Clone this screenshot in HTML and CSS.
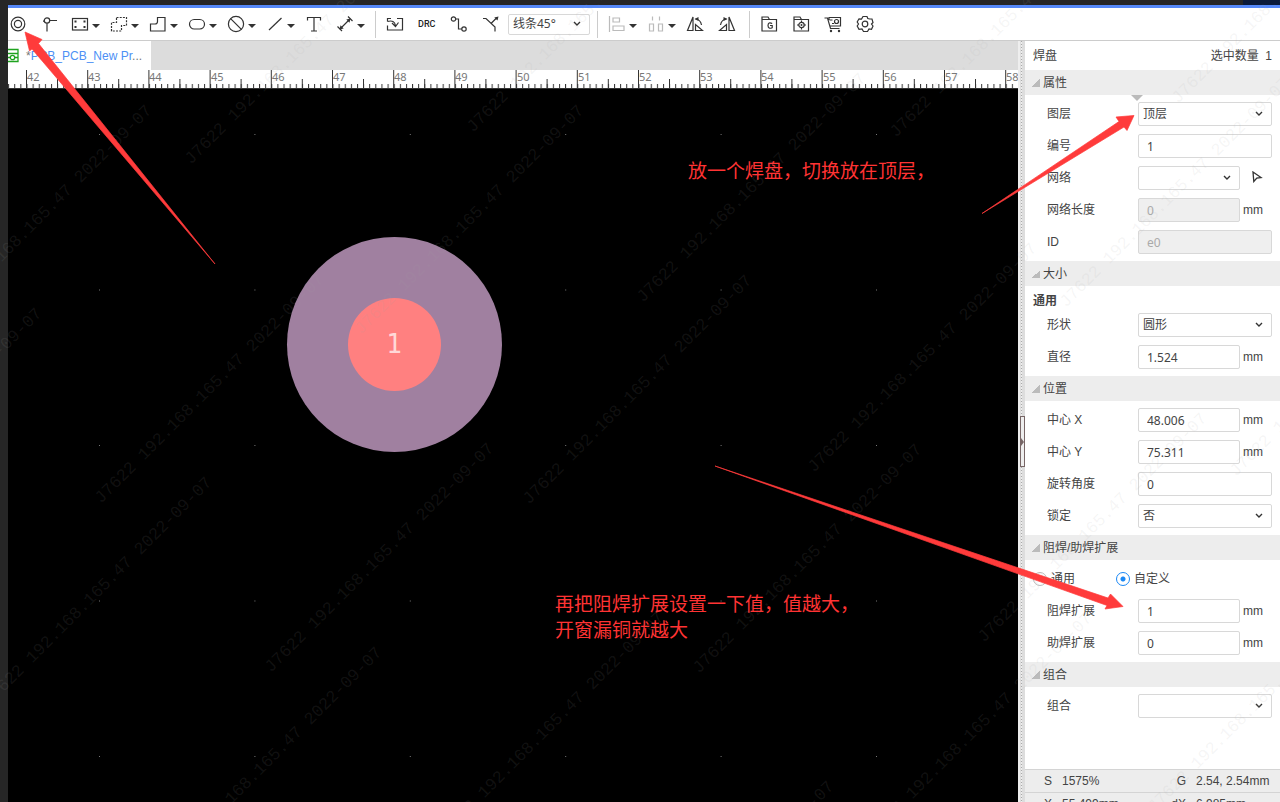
FILE: index.html
```html
<!DOCTYPE html>
<html lang="zh-CN">
<head>
<meta charset="utf-8">
<title>PCB_New Project</title>
<link rel="stylesheet" href="styles.css">
</head>
<body>
<div class="titlebar"><span class="titlebar-end"></span></div>
<div class="window">
  <header class="toolbar">
    <div class="tools">
      <button class="tool" aria-label="焊盘"><svg viewBox="0 0 18 18"><circle cx="9" cy="9" r="6.8"/><circle cx="9" cy="9" r="3.6"/></svg></button>
      <button class="tool" aria-label="过孔"><svg viewBox="0 0 18 18"><circle cx="7" cy="5.500" r="2.700"/><path d="M9.700 5.500H17M7 8.200V16.500M3 6.200h1.300"/></svg></button>
      <button class="tool drop" aria-label="矩形"><svg viewBox="0 0 18 18"><rect x="1.500" y="3.500" width="15" height="11.500"/><path class="fill" d="M3.500 5.500h2v2h-2zM12.500 5.500h2v2h-2zM3.500 11h2v2h-2zM12.500 11h2v2h-2z"/></svg><i></i></button>
      <button class="tool drop" aria-label="区域"><svg viewBox="0 0 18 18"><path stroke-dasharray="2 1.200" d="M6.500 2.500h10v8h-5v5.500h-10v-8.500h5z"/></svg><i></i></button>
      <button class="tool drop" aria-label="铺铜"><svg viewBox="0 0 18 18"><path d="M8.500 2.500h7.500v13.500H1.500V9h4.500q2.500 0 2.500-2.500z"/></svg><i></i></button>
      <button class="tool drop" aria-label="槽"><svg viewBox="0 0 18 18"><rect x="1.500" y="4.500" width="15" height="9.500" rx="4.700"/></svg><i></i></button>
      <button class="tool drop" aria-label="禁止区域"><svg viewBox="0 0 18 18"><circle cx="9" cy="9" r="7.600"/><path d="M3.600 3.600l10.800 10.800"/></svg><i></i></button>
      <button class="tool drop" aria-label="线条"><svg viewBox="0 0 18 18"><path d="M3 15L15.500 3"/></svg><i></i></button>
      <button class="tool" aria-label="文本"><svg viewBox="0 0 18 18"><path d="M2.500 5.500V2.500h13v3M9 2.500v13.500M6 16h6"/></svg></button>
      <button class="tool drop" aria-label="尺寸"><svg viewBox="0 0 18 18"><path d="M4.500 13.500L13.500 4.500M12 1.500l4.500 4.500M1.500 11.500L6 16"/><path class="fill" d="M14.500 3.500l-1 4.200-3.200-3.200zM3.500 14.500l1-4.200 3.200 3.200z"/></svg><i></i></button>
    </div>
    <span class="sep"></span>
    <div class="tools wide">
      <button class="tool" aria-label="导入变更"><svg viewBox="0 0 18 18"><path d="M5 3.500H1.500v3M11 3.500H16.500V15H1.500V10.500M1.500 6.500q7-2 8 4M6 8l3.500 3.500 3-4"/></svg></button>
      <button class="tool text">DRC</button>
      <button class="tool" aria-label="布线"><svg viewBox="0 0 18 18"><circle cx="3.500" cy="4" r="2.200"/><circle cx="14" cy="14" r="2.200"/><path d="M5.700 4H8.500V14h3.300"/></svg></button>
      <button class="tool" aria-label="自动布线"><svg viewBox="0 0 18 18"><path d="M1 3.500h3L13 12v4.500M9 8.500L15 2.500"/><path class="fill" d="M16.500 1.500l-1 4-3.200-3z"/></svg></button>
    </div>
    <select class="field mode" aria-label="布线拐角"><option>线条45°</option></select>
    <span class="sep"></span>
    <div class="tools">
      <button class="tool drop faint" aria-label="对齐"><svg viewBox="0 0 18 18"><path d="M1.500 1v16M5 3h6.500v4H5zM5 11h11v4.500H5z"/></svg><i></i></button>
      <button class="tool drop faint" aria-label="分布"><svg viewBox="0 0 18 18"><path d="M5.500 1.500v4M12.500 1.500v4M2.500 9h4v7h-4zM11.500 9h4v7h-4z"/></svg><i></i></button>
      <div class="tools wide">
        <button class="tool" aria-label="向左旋转"><svg viewBox="0 0 18 18"><path d="M7 2v13.500H1.500zM9.500 15.500h7l-7-6zM9.500 4q5 .500 6 6"/><path class="fill" d="M8.500 4l4-2v4z"/></svg></button>
        <button class="tool" aria-label="向右旋转"><svg viewBox="0 0 18 18"><path d="M11 2v13.500h5.500zM8.500 15.500h-7l7-6zM8.500 4q-5 .500-6 6"/><path class="fill" d="M9.500 4l-4-2v4z"/></svg></button>
      </div>
    </div>
    <span class="sep"></span>
    <div class="tools wide">
      <button class="tool" aria-label="生成制造文件"><svg viewBox="0 0 18 18"><path d="M2 16V2h6l1.500 2.500H16.500V16zM2 4.500h8M12.200 8.500q-4-2-4.200 2 .2 4 4.200 2.200V10.500H10"/></svg></button>
      <button class="tool" aria-label="导出坐标文件"><svg viewBox="0 0 18 18"><path d="M2 16V2h6l1.500 2.500H16.500V16zM2 4.500h8M9.500 5.500v2M9.500 12.500v2M5 10h2M12 10h2"/><circle cx="9.500" cy="10" r="2.700"/><circle class="fill" cx="9.500" cy="10" r="1"/></svg></button>
      <button class="tool" aria-label="下单"><svg viewBox="0 0 18 18"><path d="M.500 3H3.500L6.500 13.500H15.500M5 5v-2.500h11.500V11H6M5.500 5h3M8 8.500h2"/><circle cx="12.500" cy="6.500" r="2"/><circle class="fill" cx="7" cy="16" r="1.200"/><circle class="fill" cx="15" cy="16" r="1.200"/></svg></button>
      <button class="tool" aria-label="设置"><svg viewBox="0 0 18 18"><path d="M7 1.500h4l.8 2 2 .5L16 4l1 3.500-1.500 1.500L17 11l-1.500 3.300-2.500-.3-1.500 2.500h-4L6 14l-3 .3L1.200 11 2.500 9 1.200 7 3 3.800l2.500.3z"/><circle cx="9" cy="9" r="2.800"/></svg></button>
    </div>
  </header>

  <div class="workspace">
    <main class="editor">
      <nav class="tabs">
        <a class="tab" href="#pcb"><svg class="tab-icon" viewBox="0 0 11 15"><path d="M0 1.500h10v12H0M0 5.500h10M0 9.500h2M7 9.500h3"/><circle cx="4.500" cy="9.500" r="2.200"/></svg><span><span class="mark">*</span>PCB_PCB_New Pr<span class="mark">...</span></span></a>
      </nav>
      <svg class="ruler" height="19" aria-hidden="true">
        <defs>
          <pattern id="minor" x="18.500" y="0" width="6.120" height="19" patternUnits="userSpaceOnUse"><path d="M.5 14v4"/></pattern>
          <pattern id="half" x="49" y="0" width="61.200" height="19" patternUnits="userSpaceOnUse"><path d="M.5 9v9"/></pattern>
          <pattern id="major" x="18" y="0" width="61.200" height="19" patternUnits="userSpaceOnUse"><path d="M.5 0v18"/></pattern>
        </defs>
        <g stroke="none">
          <rect width="100%" height="19" fill="url(#minor)"/>
          <rect width="100%" height="19" fill="url(#half)"/>
          <rect width="100%" height="19" fill="url(#major)"/>
        </g>
        <path d="M0 18.500h2000"/>
        <g>
          <text x="19" y="11">42</text><text x="80" y="11">43</text><text x="141" y="11">44</text><text x="203" y="11">45</text>
          <text x="264" y="11">46</text><text x="325" y="11">47</text><text x="386" y="11">48</text><text x="447" y="11">49</text>
          <text x="509" y="11">50</text><text x="570" y="11">51</text><text x="631" y="11">52</text><text x="692" y="11">53</text>
          <text x="753" y="11">54</text><text x="815" y="11">55</text><text x="876" y="11">56</text><text x="937" y="11">57</text><text x="998" y="11">58</text>
        </g>
      </svg>
      <svg class="board" role="img" aria-label="PCB 画布">
        <defs><pattern id="grid" x="91" y="45" width="155.400" height="155.500" patternUnits="userSpaceOnUse"><path fill="#777" d="M0 0h1v1H0z"/></pattern></defs>
        <rect width="100%" height="100%" fill="url(#grid)"/>
        <circle cx="386.500" cy="255.500" r="107.500" fill="#a080a0"/>
        <circle cx="386.500" cy="255.500" r="46.500" fill="#ff8080"/>
        <text class="pin" x="386" y="264">1</text>
        <text class="note" x="680" y="89">放一个焊盘，切换放在顶层，</text>
        <text class="note" x="547" y="522">再把阻焊扩展设置一下值，值越大，</text>
        <text class="note" x="547" y="548">开窗漏铜就越大</text>
      </svg>
    </main>

    <div class="splitter"><button class="handle" aria-label="折叠面板"></button></div>

    <aside class="panel">
      <div class="panel-head"><span>焊盘</span><span>选中数量&nbsp; 1</span></div>

      <h2 class="section">属性</h2>
      <div class="group">
        <span class="pointer"></span>
        <div class="row"><label for="layer">图层</label><select id="layer" class="field"><option>顶层</option></select></div>
        <div class="row"><label for="num">编号</label><input id="num" class="field" value="1"></div>
        <div class="row"><label for="net">网络</label><select id="net" class="field short"><option></option></select><button class="pick" aria-label="选择网络"><svg viewBox="0 0 12 12"><path d="M2 1l8 5.500-4.200.5L2.800 10.500z"/></svg></button></div>
        <div class="row"><label for="len">网络长度</label><input id="len" class="field short" value="0" disabled><span class="unit">mm</span></div>
        <div class="row"><label for="id">ID</label><input id="id" class="field" value="e0" disabled></div>
      </div>

      <h2 class="section">大小</h2>
      <div class="group">
        <h3 class="sub">通用</h3>
        <div class="row"><label for="shape">形状</label><select id="shape" class="field"><option>圆形</option></select></div>
        <div class="row"><label for="dia">直径</label><input id="dia" class="field short" value="1.524"><span class="unit">mm</span></div>
      </div>

      <h2 class="section">位置</h2>
      <div class="group">
        <div class="row"><label for="cx">中心 X</label><input id="cx" class="field short" value="48.006"><span class="unit">mm</span></div>
        <div class="row"><label for="cy">中心 Y</label><input id="cy" class="field short" value="75.311"><span class="unit">mm</span></div>
        <div class="row"><label for="rot">旋转角度</label><input id="rot" class="field" value="0"></div>
        <div class="row"><label for="lock">锁定</label><select id="lock" class="field"><option>否</option></select></div>
      </div>

      <h2 class="section">阻焊/助焊扩展</h2>
      <div class="group">
        <div class="radios">
          <label><input type="radio" name="expand">通用</label>
          <label><input type="radio" name="expand" checked>自定义</label>
        </div>
        <div class="row"><label for="solder">阻焊扩展</label><input id="solder" class="field short" value="1"><span class="unit">mm</span></div>
        <div class="row"><label for="paste">助焊扩展</label><input id="paste" class="field short" value="0"><span class="unit">mm</span></div>
      </div>

      <h2 class="section">组合</h2>
      <div class="group">
        <div class="row"><label for="grp">组合</label><select id="grp" class="field"><option></option></select></div>
      </div>

      <footer class="status">
        <div class="status-row"><span>S</span><span>1575%</span><span class="key">G</span><span>2.54, 2.54mm</span></div>
        <div class="status-row"><span>X</span><span>55.499mm</span><span class="key">dX</span><span>6.985mm</span></div>
      </footer>
    </aside>
  </div>
</div>

<svg class="overlay" aria-hidden="true">
  <defs><text id="wm">J7622 192.168.165.47 2022-09-07</text></defs>
  <g class="watermark">
    <use href="#wm" transform="translate(-241 165) rotate(-45)"/><use href="#wm" transform="translate(-71 335) rotate(-45)"/>
    <use href="#wm" transform="translate(-181 538) rotate(-45)"/><use href="#wm" transform="translate(-11 707) rotate(-45)"/>
    <use href="#wm" transform="translate(159 877) rotate(-45)"/><use href="#wm" transform="translate(101 504) rotate(-45)"/>
    <use href="#wm" transform="translate(271 673) rotate(-45)"/><use href="#wm" transform="translate(441 842) rotate(-45)"/>
    <use href="#wm" transform="translate(611 1011) rotate(-45)"/><use href="#wm" transform="translate(191 165) rotate(-45)"/>
    <use href="#wm" transform="translate(361 335) rotate(-45)"/><use href="#wm" transform="translate(529 505) rotate(-45)"/>
    <use href="#wm" transform="translate(699 674) rotate(-45)"/><use href="#wm" transform="translate(869 843) rotate(-45)"/>
    <use href="#wm" transform="translate(473 133) rotate(-45)"/><use href="#wm" transform="translate(643 303) rotate(-45)"/>
    <use href="#wm" transform="translate(814 473) rotate(-45)"/><use href="#wm" transform="translate(984 643) rotate(-45)"/>
    <use href="#wm" transform="translate(1154 813) rotate(-45)"/><use href="#wm" transform="translate(896 138) rotate(-45)"/>
    <use href="#wm" transform="translate(1066 308) rotate(-45)"/><use href="#wm" transform="translate(1236 477) rotate(-45)"/>
    <use href="#wm" transform="translate(1178 104) rotate(-45)"/>
  </g>
  <g class="arrows">
    <path d="M25 32L42 39.500L38.500 43.500L215 264L32 49L29.500 51z"/>
    <path d="M1134 115.500L1127 130.500L1124 127L982 213.500L1119 121.500L1116 117z"/>
    <path d="M1123 606.500L1105 609L1107 605.500L715 466L1108 598L1110.500 594z"/>
  </g>
</svg>
</body>
</html>
```
FILE: styles.css
```css
* { box-sizing: border-box; }

body {
  margin: 0;
  height: 100vh;
  overflow: hidden;
  display: flex;
  flex-direction: column;
  position: relative;
  background: #262626;
  color: #444;
  font: 12px/16px "Liberation Sans", "Noto Sans CJK SC", sans-serif;
}

button, input, select { font: inherit; color: inherit; }
button { background: none; border: 0; padding: 0; }

.titlebar { flex: none; height: 5px; display: flex; justify-content: flex-end; }
.titlebar-end { width: 37px; background: #0b1a3a; }

.window {
  flex: 1;
  min-height: 0;
  margin-left: 8px;
  display: flex;
  flex-direction: column;
  border-top: 3px solid #5588f8;
}

.toolbar {
  flex: none;
  height: 33px;
  display: flex;
  align-items: center;
  padding-left: 1px;
  background: #fff;
  border-bottom: 1px solid #ccc;
}
.tools { display: flex; gap: 11px; }
.tools.wide { gap: 12px; }
.tool { width: 20px; height: 18px; display: flex; align-items: center; gap: 3px; }
.tool.drop { width: 28px; }
.tool svg {
  flex: none;
  width: 18px;
  height: 18px;
  fill: none;
  stroke: #333;
  stroke-width: 1.2;
}
.tool .fill { fill: #333; stroke: none; }
.tool.faint svg { stroke: #bbb; }
.tool i {
  border: 4px solid transparent;
  border-bottom: 0;
  border-top-color: #333;
  margin-top: 3px;
}
.tool.text { font: 500 9px/16px Roboto, sans-serif; color: #222; }
.sep { width: 1px; height: 27px; margin: 0 10px 0 11px; background: #ccc; }
.mode + .sep { margin-left: 7px; }
.tools.wide + .sep { margin-left: 11px; }

.field {
  flex: 1;
  min-width: 0;
  height: 24px;
  padding: 0 8px;
  background-color: #fff;
  border: 1px solid #d8d8d8;
  border-radius: 2px;
  font-family: "Noto Sans", "Noto Sans CJK SC", sans-serif;
}
select.field {
  appearance: none;
  padding: 0 4px;
  background: #fff url("data:image/svg+xml,%3Csvg xmlns='http://www.w3.org/2000/svg' width='8' height='6' fill='none' stroke='%23333' stroke-width='1.4'%3E%3Cpath d='M1 1l3 3 3-3'/%3E%3C/svg%3E") no-repeat right 8px center;
}
.field.short { flex: 0 0 102px; }
.field:disabled { background-color: #efefef; color: #aaa; }
.field.mode { flex: 0 0 82px; height: 21px; margin-left: 6px; }

.workspace { flex: 1; min-height: 0; display: flex; }
.editor { flex: 1; min-width: 0; display: flex; flex-direction: column; background: #000; }
.tabs { flex: none; height: 29px; display: flex; background: #dcdcdc; }
.tab {
  width: 143px;
  display: flex;
  align-items: center;
  gap: 7px;
  background: #fff;
  color: #4d90f5;
  text-decoration: none;
}
.tab-icon { width: 11px; height: 15px; fill: none; stroke: #1fa31f; stroke-width: 1.3; }
.mark { color: #777; }

.ruler { flex: none; width: 100%; background: #fff; stroke: #333; stroke-width: 1; }
.ruler text { stroke: none; fill: #777; font: 11px "Noto Sans", sans-serif; }
.board { flex: 1; min-height: 0; width: 100%; }
.pin { fill: #ffd8d8; font: 26px "DejaVu Sans Mono", monospace; text-anchor: middle; }
.note { fill: #f33; font: 400 19px "Noto Sans CJK SC", sans-serif; }

.splitter {
  flex: none;
  width: 7px;
  display: flex;
  align-items: center;
  background: linear-gradient(90deg, #eee 2px, transparent 2px),
    repeating-linear-gradient(#aaa 0 1px, #eee 1px 3px) 3px 0 / 1px 100% no-repeat,
    #ddd;
}
.handle {
  width: 5px;
  height: 51px;
  margin: 0 0 0 2px;
  transform: translateY(20px);
  display: flex;
  align-items: center;
  background: #eee;
  border: 1px solid #766;
}
.handle::before { content: ""; border: 4px solid transparent; border-left: 3px solid #766; border-right: 0; }

.panel { flex: none; width: 255px; display: flex; flex-direction: column; background: #fff; }
.panel-head { flex: none; height: 29px; display: flex; align-items: center; justify-content: space-between; padding: 0 8px; }
.section {
  flex: none;
  display: flex;
  align-items: center;
  gap: 3px;
  height: 25px;
  margin: 0;
  padding-left: 7px;
  background: #ededed;
  font-size: 12px;
  font-weight: 400;
}
.section::before { content: ""; width: 8px; height: 8px; background: linear-gradient(135deg, transparent 50%, #bbb 50%); }
.group { position: relative; flex: none; display: flex; flex-direction: column; gap: 8px; padding: 7px 8px 7px 22px; }
.pointer { position: absolute; left: 106px; top: 0; border: 6px solid transparent; border-top-color: #bbb; border-bottom: 0; }
.sub { margin: 0 0 -4px -14px; font-size: 12px; line-height: 16px; }
.row { display: flex; align-items: center; height: 24px; }
.row > label { width: 91px; }
.unit { margin-left: 3px; }
.pick { margin-left: 11px; width: 12px; height: 14px; }
.pick svg { width: 12px; height: 12px; fill: none; stroke: #333; stroke-width: 1.3; }
.radios { display: flex; gap: 41px; height: 24px; margin-left: -14px; }
.radios label { display: flex; align-items: center; gap: 4px; }
.radios input { appearance: none; width: 14px; height: 14px; margin: 0; border: 1px solid #bbb; border-radius: 50%; }
.radios input:checked { border-color: #1a88f5; background: radial-gradient(#1a88f5 2px, transparent 3px); }

.status { flex: none; margin-top: auto; height: 33px; overflow: hidden; background: #ededed; border-top: 1px solid #d4d4d4; }
.status-row {
  display: grid;
  grid-template-columns: 18px 92px 42px 1fr;
  align-items: center;
  height: 23px;
  padding-left: 19px;
  border-bottom: 1px solid #d4d4d4;
}
.status-row .key { text-align: right; padding-right: 10px; }

.overlay { position: absolute; inset: 0; width: 100%; height: 100%; pointer-events: none; }
.watermark { fill: #a8a8a8; fill-opacity: .11; font: 17px "Liberation Mono", monospace; }
.arrows { fill: #ff3b3b; stroke: #ff3b3b; stroke-width: .7; }
```
